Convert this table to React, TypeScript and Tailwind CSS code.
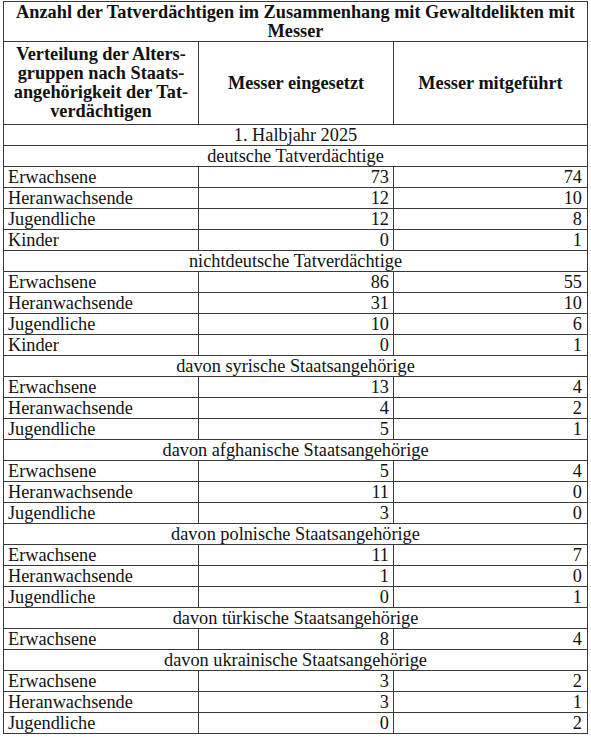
import React from 'react';

type Row = { label: string; a: number; b: number };
type Section = { title: string; rows: Row[] };

const sections: Section[] = [
  {
    title: 'deutsche Tatverdächtige',
    rows: [
      { label: 'Erwachsene', a: 73, b: 74 },
      { label: 'Heranwachsende', a: 12, b: 10 },
      { label: 'Jugendliche', a: 12, b: 8 },
      { label: 'Kinder', a: 0, b: 1 },
    ],
  },
  {
    title: 'nichtdeutsche Tatverdächtige',
    rows: [
      { label: 'Erwachsene', a: 86, b: 55 },
      { label: 'Heranwachsende', a: 31, b: 10 },
      { label: 'Jugendliche', a: 10, b: 6 },
      { label: 'Kinder', a: 0, b: 1 },
    ],
  },
  {
    title: 'davon syrische Staatsangehörige',
    rows: [
      { label: 'Erwachsene', a: 13, b: 4 },
      { label: 'Heranwachsende', a: 4, b: 2 },
      { label: 'Jugendliche', a: 5, b: 1 },
    ],
  },
  {
    title: 'davon afghanische Staatsangehörige',
    rows: [
      { label: 'Erwachsene', a: 5, b: 4 },
      { label: 'Heranwachsende', a: 11, b: 0 },
      { label: 'Jugendliche', a: 3, b: 0 },
    ],
  },
  {
    title: 'davon polnische Staatsangehörige',
    rows: [
      { label: 'Erwachsene', a: 11, b: 7 },
      { label: 'Heranwachsende', a: 1, b: 0 },
      { label: 'Jugendliche', a: 0, b: 1 },
    ],
  },
  {
    title: 'davon türkische Staatsangehörige',
    rows: [{ label: 'Erwachsene', a: 8, b: 4 }],
  },
  {
    title: 'davon ukrainische Staatsangehörige',
    rows: [
      { label: 'Erwachsene', a: 3, b: 2 },
      { label: 'Heranwachsende', a: 3, b: 1 },
      { label: 'Jugendliche', a: 0, b: 2 },
    ],
  },
];

const cell = 'border border-[#3a3a3a] p-0';

export default function App() {
  return (
    <div className="bg-white min-h-screen pl-[3px] pt-[1px] text-[#111] font-['Liberation_Serif',serif]">
      <table className="w-[584px] table-fixed border-collapse text-[18.3px] leading-[20px] font-['Liberation_Serif',serif]">
        <colgroup>
          <col className="w-[195px]" />
          <col className="w-[195px]" />
          <col className="w-[194px]" />
        </colgroup>
        <tbody>
          <tr className="h-[40px]">
            <td colSpan={3} className={`${cell} text-center font-bold leading-[19px]`}>
              Anzahl der Tatverdächtigen im Zusammenhang mit Gewaltdelikten mit
              <br />
              Messer
            </td>
          </tr>
          <tr className="h-[83px]">
            <td className={`${cell} text-center font-bold leading-[19px]`}>
              Verteilung der Alters-
              <br />
              gruppen nach Staats-
              <br />
              angehörigkeit der Tat-
              <br />
              verdächtigen
            </td>
            <td className={`${cell} text-center font-bold`}>Messer eingesetzt</td>
            <td className={`${cell} text-center font-bold`}>Messer mitgeführt</td>
          </tr>
          <tr className="h-[21px]">
            <td colSpan={3} className={`${cell} text-center`}>1. Halbjahr 2025</td>
          </tr>
          {sections.map((s) => (
            <React.Fragment key={s.title}>
              <tr className="h-[21px]">
                <td colSpan={3} className={`${cell} text-center`}>{s.title}</td>
              </tr>
              {s.rows.map((r, i) => (
                <tr key={i} className="h-[21px]">
                  <td className={`${cell} pl-[4px]`}>{r.label}</td>
                  <td className={`${cell} text-right pr-[4px]`}>{r.a}</td>
                  <td className={`${cell} text-right pr-[5px]`}>{r.b}</td>
                </tr>
              ))}
            </React.Fragment>
          ))}
        </tbody>
      </table>
    </div>
  );
}
